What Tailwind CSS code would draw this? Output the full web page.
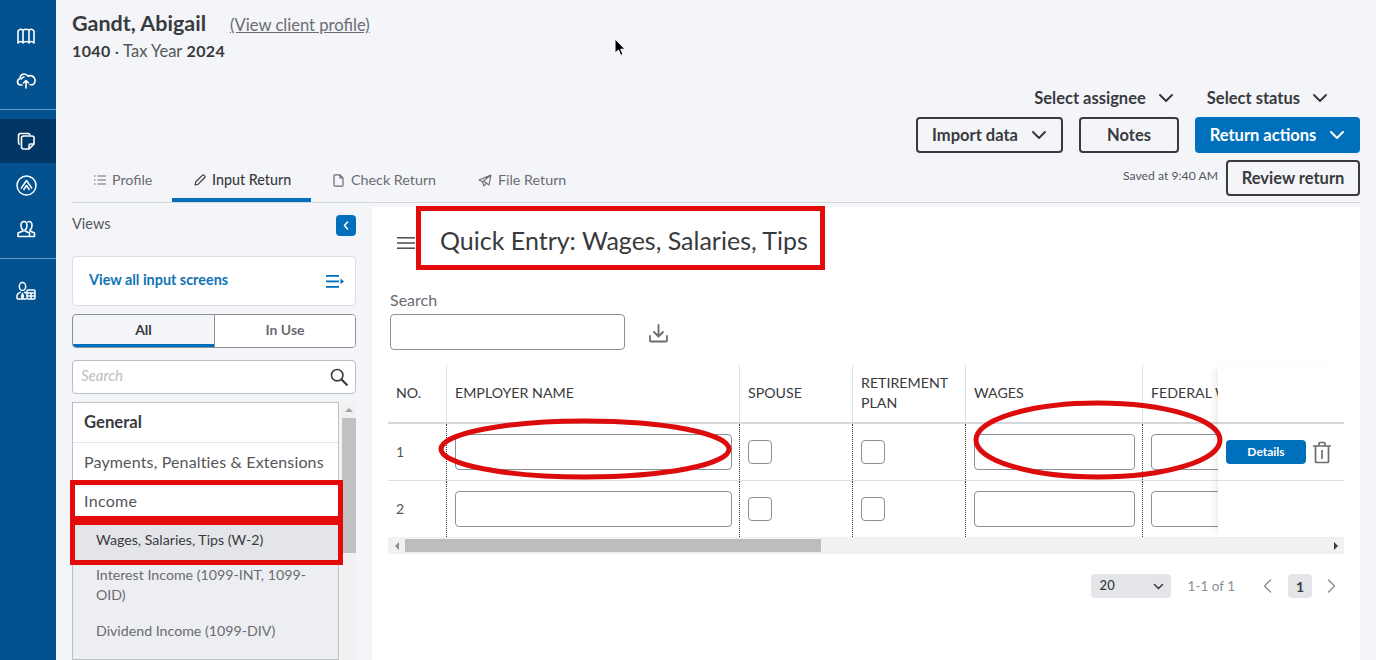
<!DOCTYPE html>
<html lang="en">
<head>
  <meta charset="UTF-8" />
  <title>Quick Entry</title>
  <script src="https://cdn.jsdelivr.net/npm/@tailwindcss/browser@4"></script>
</head>
<body class="relative h-[660px] w-[1376px] overflow-hidden bg-[#f3f5f9] font-['Lato','Liberation_Sans',sans-serif] text-[#393a3d]">
<div class="flex h-[660px]">

  <!-- Sidebar -->
  <nav class="w-14 shrink-0 bg-[#03518f] text-white flex flex-col">
    <div class="h-[110px] border-b border-white/40 flex flex-col items-center pt-[26px] pr-1 gap-[24px]">
      <svg class="w-5 h-5" viewBox="0 0 20 20" fill="none" stroke="currentColor" stroke-width="1.6" stroke-linejoin="round"><path d="M2 5C4 2.800 5.500 2.800 7 4.500 9 2.800 11 2.800 13 4.500 14.500 2.800 16 2.800 18 5V17C16 15 14.500 15 13 17 11 15 9 15 7 17 5.500 15 4 15 2 17Z M7 4.500V17M13 4.500V17"/></svg>
      <svg class="w-5 h-5" viewBox="0 0 20 20" fill="none" stroke="currentColor" stroke-width="1.6" stroke-linecap="round" stroke-linejoin="round"><path d="M6 15H4.500a3.200 3.200 0 0 1-.5-6.300A4.600 4.600 0 0 1 8 4a4.500 4.500 0 0 1 4 2.200 4.400 4.400 0 0 1 4.500 8.600H14M10 18v-7M7.500 13 10 10.500 12.500 13"/><path d="M5.500 8.800A3 3 0 0 1 8 7"/></svg>
    </div>
    <div class="mt-[9px] h-11 bg-[#023765] flex items-center justify-center pr-1">
      <svg class="w-5 h-5" viewBox="0 0 20 20" fill="none" stroke="currentColor" stroke-width="1.6" stroke-linejoin="round"><path d="M4 13.500A2 2 0 0 1 2.500 11.500V4.500A2 2 0 0 1 4.500 2.500H12A2 2 0 0 1 14 4"/><path d="M7.500 5H16a2 2 0 0 1 2 2v6l-5 5H7.500a2 2 0 0 1-2-2V7a2 2 0 0 1 2-2Z"/><path d="M13 18v-3.500a1.500 1.500 0 0 1 1.500-1.500H18"/></svg>
    </div>
    <div class="h-[44px] flex items-center justify-center pr-1">
      <svg class="w-[21px] h-[21px]" viewBox="0 0 21 21" fill="none" stroke="currentColor" stroke-width="1.500" stroke-linejoin="round"><circle cx="10.500" cy="10.500" r="9.500"/><path d="M5 13.500 10.500 5.500 16 13.500M7.500 15 10.500 10.500 13.500 15"/></svg>
    </div>
    <div class="h-[44px] flex items-center justify-center pr-1">
      <svg class="w-5 h-5" viewBox="0 0 20 20" fill="none" stroke="currentColor" stroke-width="1.600" stroke-linejoin="round"><path d="M7 11C5.500 10 5 8.200 5 6.500 5 4 6 2.500 8 2.500s3 1.500 3 4c0 1.700-.5 3.500-2 4.500v1l4.500 2v3.500H2V14l5-2Z"/><path d="M11.500 3c.7-.4 1-.5 1.500-.5 2 0 3 1.500 3 4 0 1.700-.5 3.500-2 4.500v1l4.500 2v3.500h-4.500"/></svg>
    </div>
    <div class="h-[8px] border-b border-white/40"></div>
    <div class="h-[63px] flex items-center justify-center pr-1">
      <svg class="w-5 h-5" viewBox="0 0 20 20" fill="none" stroke="currentColor" stroke-width="1.500" stroke-linejoin="round"><ellipse cx="6.500" cy="5.500" rx="3.200" ry="4"/><path d="M1 18v-3.500c0-1.800 2.500-2.800 3.700-3.500M8.300 11c.8.400 1.700.9 2.200 1.400M1 18h9.500"/><path d="M6.500 12.500 5.500 15.500 6.500 17.500 7.500 15.500Z" fill="currentColor"/><rect x="11" y="9" width="8" height="9" rx="1"/><path d="M11 12h8M15 12v6M11 15h8"/></svg>
    </div>
  </nav>

  <!-- Main -->
  <main class="flex-1 min-w-0 pl-4 pr-4">
    <!-- Client heading -->
    <div class="h-[84px] pt-[10px]">
      <div class="flex items-baseline gap-[24px]">
        <h1 class="text-[21.500px] leading-[27px] font-bold text-[#393a3d]">Gandt, Abigail</h1>
        <a class="text-[16.600px] text-[#6b6c72] underline">(View client profile)</a>
      </div>
      <p class="mt-[2px] text-[16px] leading-[22px] whitespace-nowrap"><b class="font-bold tracking-[0.4px]">1040</b> · <span class="text-[16.500px] text-[#55565b]">Tax Year</span> <b class="font-bold tracking-[0.4px]">2024</b></p>
    </div>

    <!-- Assignee / status -->
    <div class="h-[33px] flex justify-end items-start gap-[33px] pr-[32px] pt-[4px] text-[16.500px] leading-[20px] font-bold text-[#393a3d]">
      <span class="flex items-center gap-[12px]">Select assignee
        <svg class="w-[16px] h-[10px]" viewBox="0 0 16 10" fill="none" stroke="currentColor" stroke-width="2" stroke-linecap="round" stroke-linejoin="round"><path d="M2 2l6 6 6-6"/></svg></span>
      <span class="flex items-center gap-[12px]">Select status
        <svg class="w-[16px] h-[10px]" viewBox="0 0 16 10" fill="none" stroke="currentColor" stroke-width="2" stroke-linecap="round" stroke-linejoin="round"><path d="M2 2l6 6 6-6"/></svg></span>
    </div>

    <!-- Action buttons -->
    <div class="h-[43px] flex justify-end items-start gap-4 text-[16.500px] font-bold">
      <button class="h-[36px] w-[147px] rounded border-2 border-[#393a3d] flex items-center justify-center gap-[13px]">Import data
        <svg class="w-[16px] h-[10px]" viewBox="0 0 16 10" fill="none" stroke="currentColor" stroke-width="2" stroke-linecap="round" stroke-linejoin="round"><path d="M2 2l6 6 6-6"/></svg></button>
      <button class="h-[36px] w-[100px] rounded border-2 border-[#393a3d]">Notes</button>
      <button class="h-[36px] w-[165px] rounded bg-[#0070bd] text-white flex items-center justify-center gap-[13px]">Return actions
        <svg class="w-[16px] h-[10px]" viewBox="0 0 16 10" fill="none" stroke="currentColor" stroke-width="2" stroke-linecap="round" stroke-linejoin="round"><path d="M2 2l6 6 6-6"/></svg></button>
    </div>

    <!-- Tabs -->
    <div class="h-[43px] flex items-start justify-between border-b border-[#d4d7dc] w-[1288px]">
      <div class="flex h-[42px] text-[14.300px] text-[#6b6c72] whitespace-nowrap">
        <div class="w-[100px] pl-[22px] pb-[2px] flex items-center gap-[6px]">
          <svg class="w-3 h-3" viewBox="0 0 12 12" fill="none" stroke="currentColor" stroke-width="1.200"><path d="M0 2h1.500M0 6h1.500M0 10h1.500M3.500 2H12M3.500 6H12M3.500 10H12"/></svg>Profile</div>
        <div class="w-[139px] pl-[22px] pt-[2px] flex items-center gap-[6px] border-b-[4px] border-[#0070bd] text-[#393a3d] font-medium">
          <svg class="w-3 h-3" viewBox="0 0 12 12" fill="none" stroke="currentColor" stroke-width="1.100" stroke-linejoin="round"><path d="M1 11l.7-3L8.500 1.200a1 1 0 0 1 1.400 0l.9.9a1 1 0 0 1 0 1.400L4 10.300Z"/></svg>Input Return</div>
        <div class="w-[145px] pl-[22px] pb-[2px] flex items-center gap-[7px]">
          <svg class="w-[11px] h-[13px]" viewBox="0 0 11 13" fill="none" stroke="currentColor" stroke-width="1.200" stroke-linejoin="round"><path d="M1 1.800A1 1 0 0 1 2 .8h5L10 4v7.200a1 1 0 0 1-1 1H2a1 1 0 0 1-1-1ZM7 .8V4h3"/></svg>Check Return</div>
        <div class="pl-[22px] pb-[2px] flex items-center gap-[6px]">
          <svg class="w-[14px] h-[13px]" viewBox="0 0 14 13" fill="none" stroke="currentColor" stroke-width="1.100" stroke-linejoin="round"><path d="M13 1 1 6l3.500 1.800L6 12l2.200-2.800M13 1 4.500 7.800M13 1l-2 10-5-3.500"/></svg>File Return</div>
      </div>
      <div class="flex items-center gap-2">
        <span class="text-[12.200px] text-[#55565b] -mt-[3px]">Saved at 9:40 AM</span>
        <button class="h-[36px] w-[134px] rounded border-2 border-[#393a3d] text-[16.500px] font-bold pt-[1px]">Review return</button>
      </div>
    </div>

    <!-- Content -->
    <div class="flex gap-4 pt-1 w-[1288px]">
      <!-- Left column -->
      <aside class="w-[284px] shrink-0">
        <div class="flex items-start justify-between h-[41px] pt-[8px]">
          <span class="text-[14.500px] leading-[18px] text-[#55565b]">Views</span>
          <span class="w-5 h-[21px] rounded-sm bg-[#0070bd] flex items-center justify-center">
            <svg class="w-[6px] h-[9px]" viewBox="0 0 6 9" fill="none" stroke="white" stroke-width="1.600" stroke-linecap="round" stroke-linejoin="round"><path d="M4.500 1 1.500 4.500l3 3.500"/></svg>
          </span>
        </div>
        <div class="mt-[8px] h-[50px] bg-white border border-[#dcdfe3] rounded flex items-center justify-between pl-4 pr-[11px]">
          <span class="text-[14.400px] font-bold text-[#0f74b5] pb-[3px]">View all input screens</span>
          <svg class="w-[18px] h-[13px]" viewBox="0 0 18 13" fill="#0070bd"><rect y="0" width="13" height="1.800"/><rect y="5.500" width="13" height="1.800"/><rect y="11" width="13" height="1.800"/><path d="M14.500 3.500 18 6.400l-3.500 2.900Z"/></svg>
        </div>
        <div class="mt-2 h-[34px] flex text-[14px] font-bold rounded border border-[#8d9096] overflow-hidden">
          <div class="w-[141px] border-b-[3px] border-[#0070bd] flex items-center justify-center text-[#393a3d]">All</div>
          <div class="flex-1 bg-white border-l border-[#8d9096] flex items-center justify-center text-[#6b6c72] pb-[3px]">In Use</div>
        </div>
        <div class="mt-3 h-[34px] bg-white border border-[#babec5] rounded-sm flex items-center justify-between pl-2 pr-[7px]">
          <span class="text-[15px] italic text-[#babec5] pb-[3px]">Search</span>
          <svg class="w-[18px] h-[18px]" viewBox="0 0 18 18" fill="none" stroke="#393a3d" stroke-width="1.600" stroke-linecap="round"><circle cx="7.200" cy="7.200" r="5.700"/><path d="M11.500 11.500 16.800 16.800" stroke-width="2.200"/></svg>
        </div>
        <div class="mt-2 flex">
          <div class="w-[267px] h-[258px] border border-[#babec5] bg-white overflow-hidden">
            <div class="h-[40px] border-b border-[#e3e5e8] pl-[11px] flex items-center text-[16.700px] font-bold">General</div>
            <div class="h-[38px] pl-[11px] flex items-center text-[16px] text-[#55565b] whitespace-nowrap tracking-[0.15px]">Payments, Penalties &amp; Extensions</div>
            <div class="h-[39px] pl-[11px] flex items-center text-[16px] text-[#55565b] tracking-[0.3px]">Income</div>
            <div class="bg-[#eceef1] h-[140px] text-[14.200px] text-[#6b6c72]">
              <div class="h-[40px] pl-[23px] pb-[1px] flex items-center bg-[#e3e5e8] text-[#393a3d]">Wages, Salaries, Tips (W-2)</div>
              <div class="pl-[23px] pr-4 pt-[5px] leading-[20px]">Interest Income (1099-INT, 1099-OID)</div>
              <div class="pl-[23px] pt-[16px] leading-[20px]">Dividend Income (1099-DIV)</div>
            </div>
          </div>
          <div class="ml-[2px] w-[15px] h-[258px] bg-[#f1f1f1] flex flex-col items-center">
            <div class="h-[16px] flex items-center"><div class="w-0 h-0 border-x-[4px] border-x-transparent border-b-[4px] border-b-[#a3a3a3]"></div></div>
            <div class="w-[14px] h-[135px] bg-[#c1c1c1]"></div>
          </div>
        </div>
      </aside>

      <!-- Right panel -->
      <section class="flex-1 h-[453px] bg-white px-4">
        <div class="h-[76px] flex items-center gap-[25px] pl-[9px] pb-[9px]">
          <svg class="w-[18px] h-[12px] shrink-0 mt-[5px]" viewBox="0 0 18 12" fill="#55565b"><rect width="18" height="1.600"/><rect y="5.200" width="18" height="1.600"/><rect y="10.400" width="18" height="1.600"/></svg>
          <h2 class="text-[25px] text-[#393a3d] font-normal">Quick Entry: Wages, Salaries, Tips</h2>
        </div>
        <div class="mt-2 pl-[2px] text-[16px] leading-[18px] text-[#6b6c72]">Search</div>
        <div class="mt-[5px] h-[36px] flex items-center pl-[2px]">
          <div class="w-[235px] h-[36px] border border-[#8d9096] rounded"></div>
          <svg class="ml-[24px] w-[19px] h-[19px] mt-[2px]" viewBox="0 0 19 19" fill="none" stroke="#6b6c72" stroke-width="1.800" stroke-linecap="round" stroke-linejoin="round"><path d="M9.500 1v11M5 8l4.500 4.500L14 8M1 12v4.500a1 1 0 0 0 1 1h15a1 1 0 0 0 1-1V12"/></svg>
        </div>

        <!-- Table -->
        <div class="relative mt-[15px] w-[956px]">
          <div class="grid grid-cols-[58px_293px_113px_113px_177px_1fr] h-[59px] border-b-2 border-[#d4d7dc] text-[14.200px] leading-[20px] text-[#393a3d]">
            <div class="flex items-center pl-2 pb-[2px]">NO.</div>
            <div class="flex items-center pl-[8px] pb-[2px] border-l border-[#dcdfe3]">EMPLOYER NAME</div>
            <div class="flex items-center pl-[8px] pb-[2px] border-l border-[#dcdfe3]">SPOUSE</div>
            <div class="flex items-center pl-[8px] pb-[2px] border-l border-[#dcdfe3]">RETIREMENT<br>PLAN</div>
            <div class="flex items-center pl-[8px] pb-[2px] border-l border-[#dcdfe3]">WAGES</div>
            <div class="flex items-center pl-[8px] pb-[2px] border-l border-[#dcdfe3] whitespace-nowrap">FEDERAL WITHHOLDING</div>
          </div>
          <div class="grid grid-cols-[58px_293px_113px_113px_177px_1fr] h-[57px] border-b border-[#dcdfe3] text-[14px] text-[#55565b]">
            <div class="flex items-center pl-2 pb-[2px]">1</div>
            <div class="flex items-center pl-[8px] pr-[7px] border-l border-dotted border-[#393a3d]"><div class="h-[36px] w-full border border-[#8d9096] rounded"></div></div>
            <div class="flex items-center pl-[8px] border-l border-dotted border-[#393a3d]"><div class="w-6 h-6 border border-[#8d9096] rounded"></div></div>
            <div class="flex items-center pl-[8px] border-l border-dotted border-[#393a3d]"><div class="w-6 h-6 border border-[#8d9096] rounded"></div></div>
            <div class="flex items-center pl-[8px] pr-[7px] border-l border-dotted border-[#393a3d]"><div class="h-[36px] w-full border border-[#8d9096] rounded"></div></div>
            <div class="flex items-center pl-[8px] border-l border-dotted border-[#393a3d]"><div class="h-[36px] w-[160px] border border-[#8d9096] rounded"></div></div>
          </div>
          <div class="grid grid-cols-[58px_293px_113px_113px_177px_1fr] h-[56px] text-[14px] text-[#55565b]">
            <div class="flex items-center pl-2 pb-[2px]">2</div>
            <div class="flex items-center pl-[8px] pr-[7px] border-l border-dotted border-[#393a3d]"><div class="h-[36px] w-full border border-[#8d9096] rounded"></div></div>
            <div class="flex items-center pl-[8px] border-l border-dotted border-[#393a3d]"><div class="w-6 h-6 border border-[#8d9096] rounded"></div></div>
            <div class="flex items-center pl-[8px] border-l border-dotted border-[#393a3d]"><div class="w-6 h-6 border border-[#8d9096] rounded"></div></div>
            <div class="flex items-center pl-[8px] pr-[7px] border-l border-dotted border-[#393a3d]"><div class="h-[36px] w-full border border-[#8d9096] rounded"></div></div>
            <div class="flex items-center pl-[8px] border-l border-dotted border-[#393a3d]"><div class="h-[36px] w-[160px] border border-[#8d9096] rounded"></div></div>
          </div>
          <!-- Scrollbar -->
          <div class="h-[17px] bg-[#f1f1f1] flex items-center">
            <div class="w-[17px] flex justify-center"><div class="w-0 h-0 border-y-[4px] border-y-transparent border-r-[4px] border-r-[#8d8d8d]"></div></div>
            <div class="w-[416px] h-[13px] bg-[#bdbdbd]"></div>
            <div class="ml-auto w-[17px] flex justify-center"><div class="w-0 h-0 border-y-[4px] border-y-transparent border-l-[4px] border-l-[#393a3d]"></div></div>
          </div>
          <!-- Pinned action column -->
          <div class="absolute right-0 top-0 w-[126px] h-[172px] bg-white shadow-[-6px_0_8px_-4px_rgba(0,0,0,0.1)]">
            <div class="h-[59px] border-b-2 border-[#d4d7dc]"></div>
            <div class="h-[57px] border-b border-[#dcdfe3] flex items-center pl-2 gap-[6px]">
              <span class="w-20 h-6 rounded bg-[#0070bd] text-white text-[12px] font-bold flex items-center justify-center">Details</span>
              <svg class="w-5 h-[23px]" viewBox="0 0 20 23" fill="none" stroke="#6b6c72" stroke-width="1.700" stroke-linejoin="round"><path d="M1 5h18M7 5V2.500a1 1 0 0 1 1-1h4a1 1 0 0 1 1 1V5M3.500 5v15.500a1 1 0 0 0 1 1h11a1 1 0 0 0 1-1V5M10 9v9"/></svg>
            </div>
          </div>
        </div>

        <!-- Pagination -->
        <div class="mt-[20px] w-[956px] h-6 flex items-center justify-end text-[13.500px] text-[#8d9096]">
          <div class="w-20 h-6 rounded bg-[#e3e5e8] flex items-center justify-between pl-[9px] pr-[7px] text-[#393a3d] text-[13px] font-medium">20
            <svg class="w-[11px] h-[7px]" viewBox="0 0 11 7" fill="none" stroke="#393a3d" stroke-width="1.500" stroke-linecap="round" stroke-linejoin="round"><path d="M1.500 1.500l4 4 4-4"/></svg>
          </div>
          <span class="ml-[17px]">1-1 of 1</span>
          <svg class="ml-[28px] w-[9px] h-[14px]" viewBox="0 0 9 14" fill="none" stroke="#8d9096" stroke-width="1.500" stroke-linecap="round" stroke-linejoin="round"><path d="M7.500 1 1.500 7l6 6"/></svg>
          <span class="ml-[16px] w-6 h-6 rounded bg-[#e3e5e8] text-[#393a3d] text-[14px] font-bold flex items-center justify-center">1</span>
          <svg class="ml-[15px] mr-[8px] w-[9px] h-[14px]" viewBox="0 0 9 14" fill="none" stroke="#8d9096" stroke-width="1.500" stroke-linecap="round" stroke-linejoin="round"><path d="M1.500 1l6 6-6 6"/></svg>
        </div>
      </section>
    </div>
  </main>
</div>

<!-- Red annotations drawn over the screenshot -->
<div class="absolute left-[416px] top-[206px] w-[409px] h-[64px] border-[5px] border-[#e40b0b]"></div>
<div class="absolute left-[70px] top-[480px] w-[273px] h-[41px] border-[5px] border-[#e40b0b]"></div>
<div class="absolute left-[70px] top-[520px] w-[273px] h-[45px] border-[5px] border-[#e40b0b]"></div>
<svg class="absolute left-0 top-0 w-[1376px] h-[660px] pointer-events-none" viewBox="0 0 1376 660" fill="none" stroke="#dc0c0c" stroke-width="5">
  <ellipse cx="585" cy="449" rx="144" ry="28"/>
  <ellipse cx="1098" cy="440" rx="122" ry="37"/>
</svg>
<!-- Mouse cursor -->
<svg class="absolute left-[614px] top-[38px] w-[12px] h-[19px]" viewBox="0 0 12 19"><path d="M1 1v14l3.500-3 2.300 5.500 2.200-1-2.300-5.300H11Z" fill="#000" stroke="#fff" stroke-width="1"/></svg>
</body>
</html>
